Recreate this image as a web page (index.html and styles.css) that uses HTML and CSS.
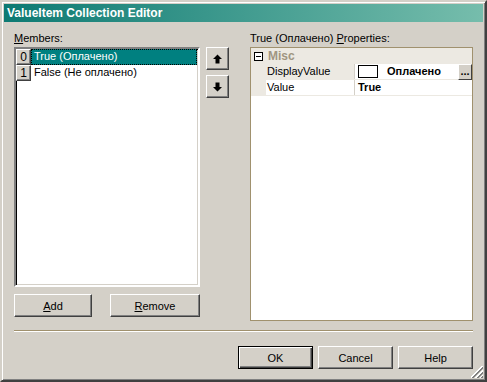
FILE: index.html
```html
<!DOCTYPE html>
<html>
<head>
<meta charset="utf-8">
<link rel="stylesheet" href="styles.css">
</head>
<body>
<div class="window">
  <div class="titlebar">ValueItem Collection Editor</div>
  <div class="content">
    <div class="main">
      <div class="leftcol">
        <div class="label"><u>M</u>embers:</div>
        <div class="listbox">
          <div class="row selected"><span class="idx">0</span><span class="item">True (Оплачено)</span></div>
          <div class="row"><span class="idx">1</span><span class="item">False (Не оплачено)</span></div>
        </div>
        <div class="leftbtns">
          <div class="btn add"><u>A</u>dd</div>
          <div class="btn remove"><u>R</u>emove</div>
        </div>
      </div>
      <div class="arrows">
        <div class="btn arrow"><svg width="9" height="10" viewBox="0 0 9 10"><path d="M4.5 0.5 L9 5 L6.5 5 L6.5 9.5 L2.5 9.5 L2.5 5 L0 5 Z" fill="#000"/></svg></div>
        <div class="btn arrow"><svg width="9" height="10" viewBox="0 0 9 10"><path d="M4.5 9.5 L9 5 L6.5 5 L6.5 0.5 L2.5 0.5 L2.5 5 L0 5 Z" fill="#000"/></svg></div>
      </div>
      <div class="rightcol">
        <div class="label">True (Оплачено) <u>P</u>roperties:</div>
        <div class="grid">
          <div class="cat"><span class="toggle"></span><span class="catname">Misc</span></div>
          <div class="prop">
            <div class="gutter"></div>
            <div class="pname">DisplayValue</div>
            <div class="pval"><span class="swatch"></span><span class="bold">Оплачено</span><span class="dots">...</span></div>
          </div>
          <div class="prop sel">
            <div class="gutter"></div>
            <div class="pname">Value</div>
            <div class="pval"><span class="bold">True</span></div>
          </div>
        </div>
      </div>
    </div>
    <div class="sep"></div>
    <div class="bottom">
      <div class="btn dlg default">OK</div>
      <div class="btn dlg">Cancel</div>
      <div class="btn dlg">Help</div>
    </div>
    <div class="grip"></div>
  </div>
</div>
</body>
</html>
```
FILE: styles.css
```css
* { box-sizing: border-box; }
html, body { margin: 0; padding: 0; background: #d4d0c8; }
body { font-family: "Liberation Sans", Arial, sans-serif; font-size: 11px; color: #000; }
u { text-decoration: underline; text-underline-offset: 1px; }

.window {
  width: 487px; height: 382px;
  background: #d4d0c8;
  border-style: solid; border-width: 2px;
  border-color: #d4d0c8 #404040 #404040 #d4d0c8;
  box-shadow: inset 1px 1px 0 #fff, inset -1px -1px 0 #808080;
  padding: 2px;
  display: flex; flex-direction: column;
  position: relative;
}
.titlebar {
  height: 18px;
  background: linear-gradient(to right, #0d7a73, #76bdac);
  color: #fff; font-weight: bold;
  padding: 1px 0 0 3px; line-height: 16px;
  font-family: "Liberation Sans", Arial, sans-serif; font-size: 12px;
}
.content { flex: 1; padding: 9px 10px 0 10px; display: flex; flex-direction: column; }
.main { display: flex; }
.label { height: 16px; line-height: 14px; }
.leftcol { width: 186px; display: flex; flex-direction: column; }
.listbox {
  height: 240px; background: #fff;
  border: 2px solid; border-color: #808080 #fff #fff #808080;
  box-shadow: inset 1px 1px 0 #000, inset -1px -1px 0 #d4d0c8;
  padding: 0 1px 0 0;
}
.row { display: flex; height: 16px; line-height: 14px; }
.idx {
  width: 15px; height: 16px; text-align: center; font-size: 12px;
  background: #d4d0c8;
  border-style: solid; border-width: 1px; border-color: #fff #404040 #404040 #fff;
  box-shadow: inset -1px -1px 0 #808080;
}
.item { flex: 1; padding-left: 3px; }
.row.selected .item { background: #008080; color: #fff; outline: 1px dotted #000; outline-offset: -1px; }
.leftbtns { display: flex; justify-content: space-between; margin-top: 7px; }
.btn {
  height: 23px; background: #d4d0c8;
  border-style: solid; border-width: 1px; border-color: #fff #404040 #404040 #fff;
  box-shadow: inset -1px -1px 0 #808080;
  display: flex; align-items: center; justify-content: center;
}
.add { width: 78px; }
.remove { width: 90px; }
.arrows { margin-left: 6px; margin-top: 16px; display: flex; flex-direction: column; gap: 5px; }
.arrow { width: 23px; height: 23px; }
.rightcol { margin-left: 21px; width: 223px; display: flex; flex-direction: column; }
.grid { height: 274px; background: #fff; border: 1px solid #a0916e; }
.cat { height: 16px; background: #ece9e2; display: flex; align-items: center; }
.toggle {
  width: 9px; height: 9px; border: 1px solid #000; margin-left: 3px; position: relative; background: #fff;
}
.toggle::after { content: ""; position: absolute; left: 1px; top: 3px; width: 5px; height: 1px; background: #000; }
.catname { font-weight: bold; color: #a09581; margin-left: 5px; font-size: 12px; }
.prop { display: flex; height: 16px; line-height: 15px; border-bottom: 1px solid #ece9e2; }
.gutter { width: 15px; background: #ece9e2; }
.pname { width: 89px; padding-left: 1px; background: #ece9e2; border-right: 1px solid #d4d0c8; }
.prop.sel .pname { background: #fff; }
.pval { flex: 1; display: flex; align-items: center; padding-left: 3px; }
.swatch { width: 20px; height: 13px; border: 1px solid #000; background: #fff; margin-right: 9px; }
.bold { font-weight: bold; }
.dots {
  margin-left: auto; width: 14px; height: 16px; background: #d4d0c8; font-weight: bold; text-align: center;
  border-style: solid; border-width: 1px; border-color: #fff #404040 #404040 #fff; line-height: 12px;
}
.sep { margin-top: 9px; height: 2px; border-top: 1px solid #a0916e; border-bottom: 1px solid #fff; width: 459px; }
.bottom { display: flex; justify-content: flex-end; gap: 5px; margin-top: 14px; width: 459px; }
.dlg { width: 75px; }
.default { border: 1px solid #000; box-shadow: inset 1px 1px 0 #fff, inset -1px -1px 0 #404040, inset -2px -2px 0 #808080; }
.grip {
  position: absolute; right: 2px; bottom: 2px; width: 12px; height: 12px;
  background: linear-gradient(135deg, transparent 0 45%, #fff 45% 52%, #808080 52% 60%, transparent 60% 65%, #fff 65% 72%, #808080 72% 80%, transparent 80% 85%, #fff 85% 90%, #808080 90%);
}
```
